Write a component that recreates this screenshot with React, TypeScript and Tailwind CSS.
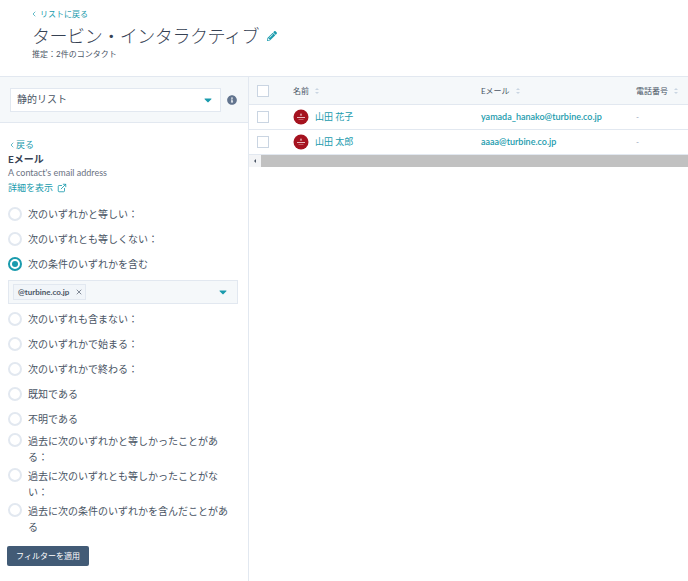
import { ChevronLeft, ExternalLink, X } from "lucide-react";
import { FaCaretDown, FaInfoCircle, FaPencilAlt } from "react-icons/fa";

const optionsTop = ["次のいずれかと等しい：", "次のいずれとも等しくない："];
const optionsBottom = [
  "次のいずれも含まない：",
  "次のいずれかで始まる：",
  "次のいずれかで終わる：",
  "既知である",
  "不明である",
];
const optionsLong = [
  "過去に次のいずれかと等しかったことがある：",
  "過去に次のいずれとも等しかったことがない：",
  "過去に次の条件のいずれかを含んだことがある",
];

const contacts = [
  { name: "山田 花子", email: "yamada_hanako@turbine.co.jp" },
  { name: "山田 太郎", email: "aaaa@turbine.co.jp" },
];

function Radio({ label, checked = false, long = false }: { label: string; checked?: boolean; long?: boolean }) {
  return (
    <div className={`flex gap-1.5 pr-1 ${long ? "items-start py-px" : "items-center h-6"}`}>
      <span
        className={`flex size-3.5 shrink-0 items-center justify-center rounded-full border-2 bg-white ${
          checked ? "border-[#1a9bad]" : "border-slate-200"
        }`}
      >
        {checked && <span className="size-1.5 rounded-full bg-[#1a9bad]" />}
      </span>
      <span className="text-[10px] leading-4 text-gray-600">{label}</span>
    </div>
  );
}

function SortHead({ label }: { label: string }) {
  return (
    <div className="flex items-center gap-1.5 text-[8px] text-gray-600">
      {label}
      <span className="flex flex-col gap-0.5">
        <span className="size-0 border-x-2 border-b-2 border-x-transparent border-b-slate-300" />
        <span className="size-0 border-x-2 border-t-2 border-x-transparent border-t-slate-300" />
      </span>
    </div>
  );
}

function Avatar() {
  return (
    <svg viewBox="0 0 16 16" className="size-4 shrink-0">
      <circle cx="8" cy="8" r="7.5" fill="#a5121f" />
      <path d="M8 4 L9.2 6.6 H6.8 Z" fill="#e8b9bd" />
      <rect x="4" y="8" width="8" height="1" fill="#e8b9bd" />
      <rect x="5.5" y="10" width="5" height="0.6" fill="#d98c93" />
    </svg>
  );
}

export default function App() {
  return (
    <div className="flex h-screen flex-col overflow-hidden bg-white font-['Lato','Noto_Sans_CJK_JP',sans-serif] text-gray-700">
      <header className="h-[76px] shrink-0 px-8 pt-2">
        <a className="-ml-0.5 flex items-center gap-0.5 text-[8px] text-[#1a9bad]">
          <ChevronLeft className="size-2" />
          リストに戻る
        </a>
        <div className="mt-1 flex items-center gap-2">
          <h1 className="text-lg leading-6 font-light tracking-tight text-gray-700">タービン・インタラクティブ</h1>
          <FaPencilAlt className="size-2.5 text-[#1a9bad]" />
        </div>
        <p className="text-[8px] text-gray-600">推定：2件のコンタクト</p>
      </header>

      <div className="flex min-h-0 flex-1 border-t border-slate-200">
        <aside className="flex w-[249px] shrink-0 flex-col border-r border-slate-200">
          <div className="flex h-[46px] items-center gap-1.5 border-b border-slate-200 bg-[#f5f8fa] px-2.5">
            <div className="flex h-6 w-[211px] items-center justify-between border border-slate-200 bg-white px-1.5 text-[10px] text-gray-600">
              静的リスト
              <FaCaretDown className="size-3 text-[#1a9bad]" />
            </div>
            <FaInfoCircle className="size-2.5 text-slate-500" />
          </div>

          <div className="flex flex-col pt-4 pr-2.5 pl-2">
            <a className="flex items-center text-[9px] leading-3 text-[#1a9bad]">
              <ChevronLeft className="size-2" />
              戻る
            </a>
            <p className="text-[10px] leading-4 font-bold text-gray-700">Eメール</p>
            <p className="text-[9px] leading-3 text-gray-500">A contact's email address</p>
            <a className="mt-px flex items-center gap-1 text-[9px] leading-4 text-[#1a9bad]">
              詳細を表示
              <ExternalLink className="size-2.5" />
            </a>

            <div className="mt-1.5 flex flex-col gap-px">
              {optionsTop.map((o) => (
                <Radio key={o} label={o} />
              ))}
              <Radio label="次の条件のいずれかを含む" checked />
              <div className="mt-0.75 mb-0.5 flex h-6 items-center justify-between border border-slate-200 bg-[#f5f8fa] pr-2 pl-1">
                <span className="flex h-4 items-center gap-1.5 border border-slate-200 bg-slate-100 pr-0.5 pl-1 text-[8px] font-bold text-gray-600">
                  @turbine.co.jp
                  <X className="size-2" />
                </span>
                <FaCaretDown className="size-3 text-[#1a9bad]" />
              </div>
              {optionsBottom.map((o) => (
                <Radio key={o} label={o} />
              ))}
              {optionsLong.map((o) => (
                <Radio key={o} label={o} long />
              ))}
            </div>

            <button className="mt-2.5 -ml-px h-5 w-[82px] rounded-xs bg-[#425b76] text-[8px] text-white">
              フィルターを適用
            </button>
          </div>
        </aside>

        <main className="min-w-0 flex-1">
          <div className="flex h-7 items-center border-b border-slate-200 bg-[#f5f8fa]">
            <span className="ml-2 size-3 border border-slate-300 bg-white" />
            <div className="ml-6 w-[188px]">
              <SortHead label="名前" />
            </div>
            <div className="w-[155px]">
              <SortHead label="Eメール" />
            </div>
            <SortHead label="電話番号" />
          </div>
          {contacts.map((c) => (
            <div key={c.email} className="flex h-[25px] items-center border-b border-slate-200">
              <span className="ml-2 size-3 border border-slate-300 bg-white" />
              <div className="ml-6 flex w-[188px] items-center gap-1.5 text-[9px] text-[#1a9bad]">
                <Avatar />
                {c.name}
              </div>
              <div className="w-[155px] text-[9px] font-semibold text-[#1a9bad]">{c.email}</div>
              <span className="text-[8px] text-slate-400">-</span>
            </div>
          ))}
          <div className="flex h-3 items-stretch bg-gray-100">
            <span className="flex w-3 items-center justify-center">
              <span className="size-0 border-y-2 border-r-2 border-y-transparent border-r-gray-600" />
            </span>
            <span className="flex-1 bg-[#c1c1c1]" />
          </div>
        </main>
      </div>
    </div>
  );
}
